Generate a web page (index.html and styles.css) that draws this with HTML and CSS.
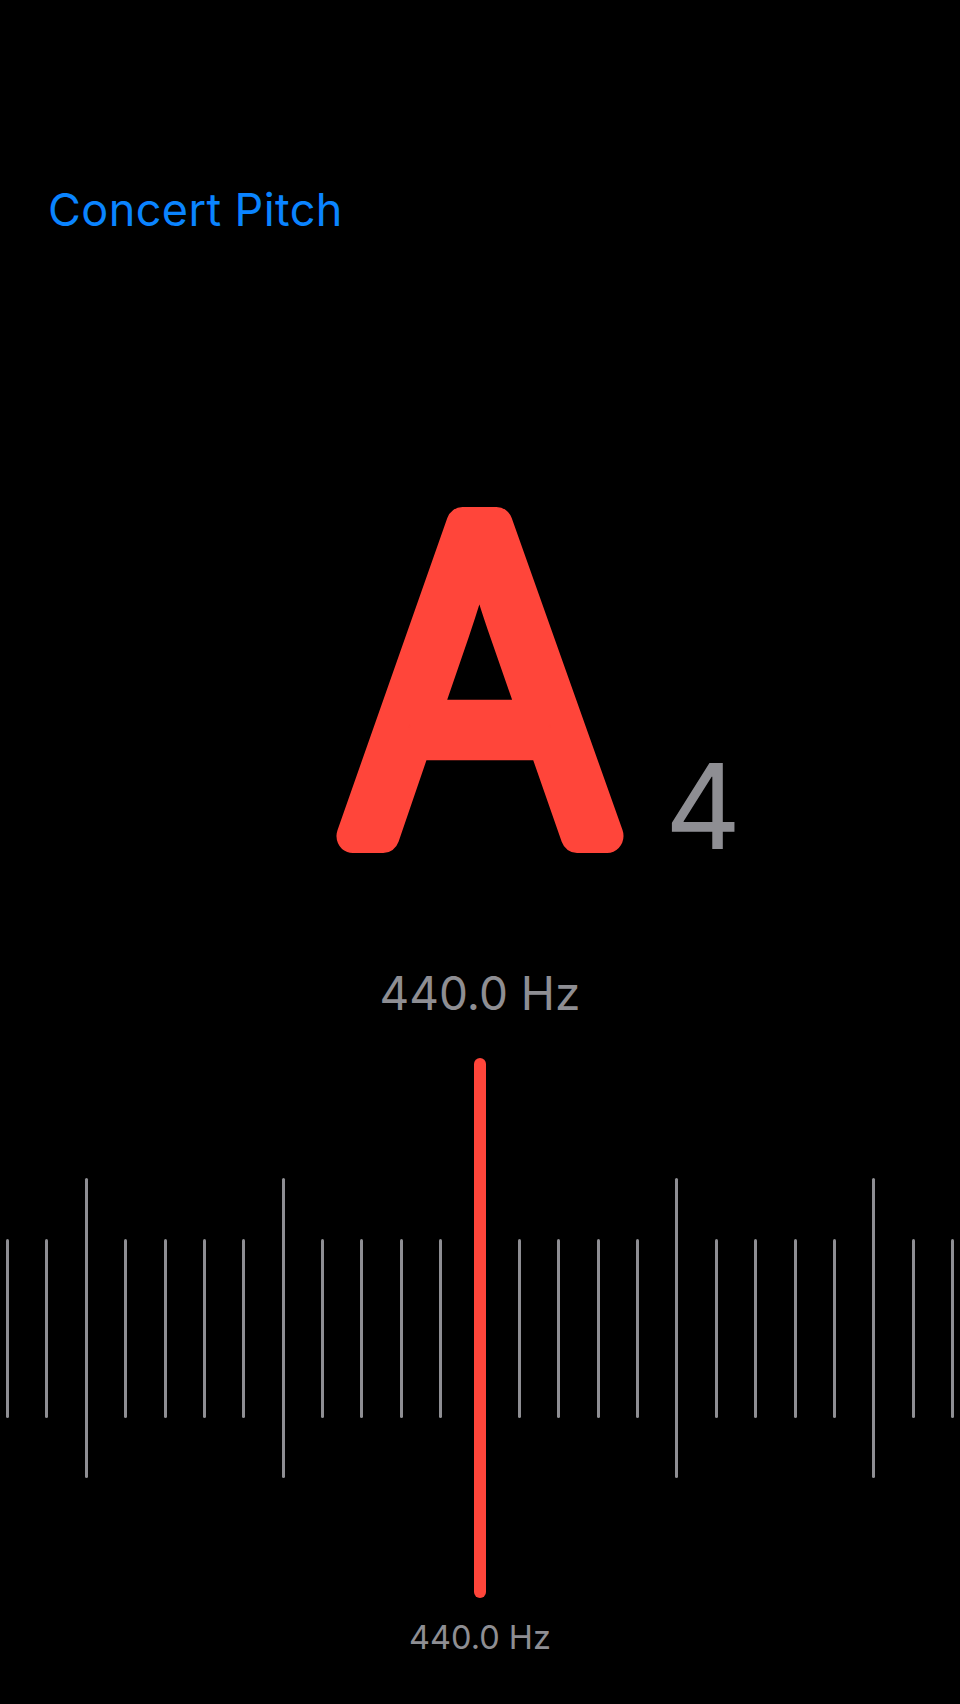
FILE: index.html
```html
<!DOCTYPE html>
<html lang="en">
<head>
<meta charset="utf-8">
<title>Tuner</title>
<link rel="stylesheet" href="styles.css">
</head>
<body>
<main class="screen">
  <div class="title">Concert Pitch</div>
  <div class="note">
    <div class="note-spacer"></div>
    <svg class="note-letter" width="300" height="360" viewBox="0 0 300 360">
      <text class="letter-text" x="0" y="0" transform="translate(150 336) scale(0.96 1)">A</text>
    </svg>
    <div class="note-octave"><span class="octave">4</span></div>
  </div>
  <div class="freq">440.0 Hz</div>
  <div class="meter">
    <div class="ticks">
      <span class="tick"></span><span class="tick"></span><span class="tick long"></span><span class="tick"></span><span class="tick"></span>
      <span class="tick"></span><span class="tick"></span><span class="tick long"></span><span class="tick"></span><span class="tick"></span>
      <span class="tick"></span><span class="tick"></span><span class="tick long"></span><span class="tick"></span><span class="tick"></span>
      <span class="tick"></span><span class="tick"></span><span class="tick long"></span><span class="tick"></span><span class="tick"></span>
      <span class="tick"></span><span class="tick"></span><span class="tick long"></span><span class="tick"></span><span class="tick"></span>
    </div>
    <div class="needle"></div>
  </div>
  <div class="freq-small">440.0 Hz</div>
</main>
</body>
</html>
```
FILE: styles.css
```css
html, body {
  margin: 0;
  padding: 0;
  background: #000;
}
body {
  width: 960px;
  height: 1704px;
  overflow: hidden;
  font-family: "Inter", "Roboto", "Liberation Sans", sans-serif;
}
.screen {
  display: flex;
  flex-direction: column;
  width: 960px;
}
.title {
  padding: 187px 0 0 48px;
  font-size: 45px;
  line-height: 45px;
  letter-spacing: 0.4px;
  color: #0a84ff;
  font-weight: 400;
}
.note {
  margin-top: 268px;
  display: grid;
  grid-template-columns: 1fr 300px 1fr;
  height: 360px;
}
.note-letter {
  display: block;
  overflow: visible;
}
.letter-text {
  font-family: "Inter", "Liberation Sans", sans-serif;
  font-weight: 300;
  font-size: 429px;
  fill: #ff453a;
  stroke: #ff453a;
  stroke-width: 34px;
  stroke-linejoin: round;
  text-anchor: middle;
}
.note-octave {
  display: flex;
  align-items: flex-end;
}
.octave {
  margin-left: 35px;
  margin-bottom: -5px;
  font-size: 118px;
  line-height: 118px;
  color: #8e8e93;
  font-weight: 400;
}
.freq {
  margin-top: 110px;
  text-align: center;
  font-size: 46px;
  line-height: 47px;
  color: #8e8e93;
}
.meter {
  position: relative;
  margin-top: 41px;
  height: 540px;
  display: flex;
  align-items: center;
}
.ticks {
  width: 100%;
  display: flex;
  justify-content: center;
  align-items: center;
  gap: 36.375px;
}
.tick {
  flex: none;
  width: 3px;
  height: 179px;
  border-radius: 1.5px;
  background: #8e8e93;
}
.tick.long {
  height: 300px;
}
.needle {
  position: absolute;
  left: 474px;
  top: 0;
  width: 12px;
  height: 540px;
  border-radius: 6px;
  background: #ff453a;
}
.freq-small {
  margin-top: 24px;
  text-align: center;
  font-size: 32.5px;
  line-height: 32px;
  color: #8e8e93;
}
```
